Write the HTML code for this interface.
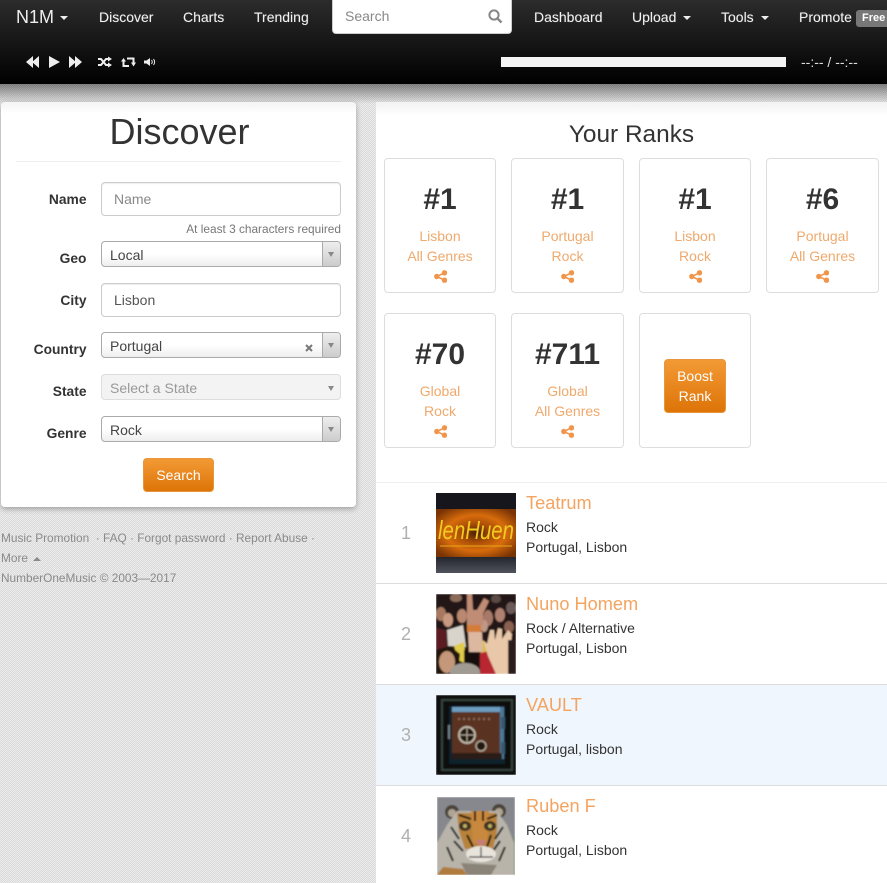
<!DOCTYPE html>
<html><head><meta charset="utf-8"><title>Discover</title>
<style>
*{box-sizing:border-box}
html,body{margin:0;padding:0}
body{width:887px;height:883px;overflow:hidden;position:relative;font-family:"Liberation Sans",sans-serif;font-size:14px;color:#333;
background-color:#e3e3e3;background-image:repeating-conic-gradient(#dadada 0 25%,#ececec 0 50%);background-size:2px 2px}
.a{position:absolute;white-space:nowrap}
#hd{position:absolute;left:0;top:0;width:887px;height:84px;background:linear-gradient(#2c2c2c,#000)}
#sh{position:absolute;left:0;top:84px;width:887px;height:20px;background:linear-gradient(rgba(0,0,0,.45),rgba(0,0,0,0))}
.n{color:#f2f2f2;top:9px;line-height:17px;text-shadow:0 0 1px rgba(255,255,255,.3)}
.car{display:inline-block;border-top:4px solid #eee;border-left:4px solid transparent;border-right:4px solid transparent;vertical-align:middle;margin-left:4px}
#card{position:absolute;left:1px;top:102px;width:355px;height:405px;background:linear-gradient(#f4f4f4,#fff 12px);border-radius:4px;box-shadow:0 2px 6px rgba(0,0,0,.3)}
#right{position:absolute;left:376px;top:102px;width:511px;height:781px;background:linear-gradient(#f2f2f2,#fff 14px)}
.lb{font-weight:bold;right:800.5px;text-align:right;color:#333;line-height:17px;font-size:13.8px}
.inp{position:absolute;left:101px;width:240px;height:34px;background:#fff;border:1px solid #ccc;border-radius:4px;box-shadow:inset 0 1px 1px rgba(0,0,0,.07);padding:0 12px;line-height:32px;color:#555}
.sel{position:absolute;left:101px;width:240px;height:26px;border:1px solid #aaa;border-radius:4px;background:linear-gradient(#fff 50%,#eee);padding-left:8px;line-height:26px;color:#444;overflow:hidden}
.sel i{position:absolute;right:0;top:0;width:18px;height:24px;border-left:1px solid #aaa;background:linear-gradient(#eee,#ccc)}
.sel i:after{content:"";position:absolute;left:5px;top:10px;border-top:5px solid #888;border-left:3.5px solid transparent;border-right:3.5px solid transparent}
.btn{position:absolute;background:linear-gradient(#f39a35,#dd7408);border:1px solid #e8953d;border-radius:4px;color:#fff;text-align:center}
.box{position:absolute;width:112px;height:135px;border:1px solid #ddd;border-radius:4px;background:#fff;text-align:center}
.box b{position:absolute;left:0;right:0;top:24px;font-size:30px;line-height:33px;color:#333}
.box span{position:absolute;left:0;right:0;top:67px;line-height:20px;color:#efa96c}
.box svg{position:absolute;left:49px;top:111px}
.ft{color:#8a8a8a;font-size:11.85px;line-height:20px;left:1px}
.row{position:absolute;left:376px;width:511px;height:101px;background:#fff;border-bottom:1px solid #ddd}
.num{position:absolute;left:25px;top:40px;font-size:18px;line-height:20px;color:#b0b0b0}
.t{position:absolute;left:150px;top:9px;font-size:18.2px;line-height:22px;color:#f4a460}
.s{position:absolute;left:150px;top:34px;line-height:20px;color:#333;white-space:nowrap}
.th{position:absolute;left:60px;top:10px;display:block}
</style></head><body>
<div id="hd"></div><div id="sh"></div>
<div class="a" style="left:16px;top:7px;font-size:18px;line-height:20px;color:#eee">N1M<span class="car" style="margin-left:6px"></span></div>
<div class="a n" style="left:99px">Discover</div>
<div class="a n" style="left:183px">Charts</div>
<div class="a n" style="left:254px">Trending</div>
<div class="a" style="left:332px;top:0;width:180px;height:34px;background:#fff;border-radius:0 0 4px 4px;border:1px solid #ccc;border-top:0;padding-left:12px;line-height:33px;color:#888">Search
<svg style="position:absolute;left:155px;top:9px" width="15" height="15" viewBox="0 0 15 15"><circle cx="6" cy="6" r="4.6" fill="none" stroke="#888" stroke-width="2"/><path d="M9.5 9.5L13.5 13.5" stroke="#888" stroke-width="2.4"/></svg></div>
<div class="a n" style="left:534px">Dashboard</div>
<div class="a n" style="left:632px">Upload<span class="car" style="margin-left:7px"></span></div>
<div class="a n" style="left:721px">Tools<span class="car" style="margin-left:7px"></span></div>
<div class="a n" style="left:799px">Promote</div>
<div class="a" style="left:856px;top:10px;width:31px;height:17px;background:#777;border-radius:3px 0 0 3px;color:#fff;font-weight:bold;font-size:11px;line-height:17px;padding-left:6px">Free</div>
<svg class="a" style="left:24px;top:54px" width="140" height="16" viewBox="0 0 140 16" fill="#eee">
<path d="M2 8L9 2V14ZM8 8L15 2V14Z"/><path d="M25 2L36 8L25 14Z"/><path d="M45 2L52 8L45 14ZM51 2L58 8L51 14Z"/>
<path d="M74 5H77L82 11H84M74 11H77L82 5H84" fill="none" stroke="#eee" stroke-width="2"/><path d="M84 2.500L88 5L84 7.500ZM84 8.500L88 11L84 13.500Z"/>
<path d="M99.500 7V12H105M109.500 9V4.500H103" fill="none" stroke="#eee" stroke-width="2"/><path d="M97 7.500L99.500 4L102 7.500ZM107 8.500L109.500 12.500L112 8.500Z"/>
<path d="M120 6.500H122.500L126 4V12L122.500 9.500H120Z"/><path d="M127.500 6C128.500 7.300 128.500 8.700 127.500 10M129.500 5C131 7 131 9 129.500 11" fill="none" stroke="#eee" stroke-width="1"/></svg>
<div class="a" style="left:501px;top:57px;width:285px;height:10px;background:#f4f4f4"></div>
<div class="a" style="left:801px;top:54px;color:#ddd;line-height:17px;font-size:14px">--:-- / --:--</div>

<div id="card"></div>
<div class="a" style="left:2px;width:355px;top:112px;text-align:center;font-size:36px;line-height:40px;color:#333">Discover</div>
<div class="a" style="left:16px;top:161px;width:325px;height:1px;background:#eee"></div>

<div class="a lb" style="top:191px">Name</div>
<div class="inp" style="top:182px;color:#888">Name</div>
<div class="a" style="right:546px;top:221px;color:#777;font-size:11.85px;line-height:16px">At least 3 characters required</div>
<div class="a lb" style="top:250px">Geo</div>
<div class="sel" style="top:241px">Local<i></i></div>
<div class="a lb" style="top:292px">City</div>
<div class="inp" style="top:283px">Lisbon</div>
<div class="a lb" style="top:341px">Country</div>
<div class="sel" style="top:332px">Portugal<i></i><svg style="position:absolute;left:203px;top:11px" width="8" height="8" viewBox="0 0 8 8"><path d="M1 1L7 7M7 1L1 7" stroke="#777" stroke-width="2"/></svg></div>
<div class="a lb" style="top:383px">State</div>
<div class="sel" style="top:374px;background:#f3f3f3;border-color:#ddd;color:#999">Select a State<span style="position:absolute;left:226px;top:11px;border-top:5px solid #888;border-left:3.500px solid transparent;border-right:3.500px solid transparent"></span></div>
<div class="a lb" style="top:425px">Genre</div>
<div class="sel" style="top:416px">Rock<i></i></div>
<div class="btn" style="left:143px;top:458px;width:71px;height:34px;line-height:32px">Search</div>

<div class="a ft" style="top:528px">Music Promotion &nbsp;· FAQ · Forgot password · Report Abuse ·</div>
<div class="a ft" style="top:548px">More <span style="display:inline-block;border-bottom:4px solid #8a8a8a;border-left:4px solid transparent;border-right:4px solid transparent;vertical-align:middle;margin-left:2px"></span></div>
<div class="a ft" style="top:568px">NumberOneMusic © 2003—2017</div>

<div id="right"></div>
<div class="a" style="left:376px;top:120px;width:511px;text-align:center;font-size:24.4px;line-height:30px;color:#333">Your Ranks</div>

<svg width="0" height="0" style="position:absolute"><defs><filter id="bl" x="-5%" y="-5%" width="110%" height="110%"><feGaussianBlur stdDeviation=".8"/></filter><g id="sh2"><circle cx="10.500" cy="2.800" r="2.700" fill="#f0954a"/><circle cx="2.800" cy="6.500" r="2.700" fill="#f0954a"/><circle cx="10.500" cy="10.200" r="2.700" fill="#f0954a"/><path d="M10.500 2.800L2.800 6.500L10.500 10.200" fill="none" stroke="#f0954a" stroke-width="1.600"/></g></defs></svg>

<div class="box" style="left:384px;top:158px"><b>#1</b><span>Lisbon<br>All Genres</span><svg width="13" height="13"><use href="#sh2"/></svg></div>
<div class="box" style="left:511px;top:158px;width:113px"><b>#1</b><span>Portugal<br>Rock</span><svg width="13" height="13"><use href="#sh2"/></svg></div>
<div class="box" style="left:639px;top:158px"><b>#1</b><span>Lisbon<br>Rock</span><svg width="13" height="13"><use href="#sh2"/></svg></div>
<div class="box" style="left:766px;top:158px;width:113px"><b>#6</b><span>Portugal<br>All Genres</span><svg width="13" height="13"><use href="#sh2"/></svg></div>
<div class="box" style="left:384px;top:313px"><b>#70</b><span>Global<br>Rock</span><svg width="13" height="13"><use href="#sh2"/></svg></div>
<div class="box" style="left:511px;top:313px;width:113px"><b>#711</b><span>Global<br>All Genres</span><svg width="13" height="13"><use href="#sh2"/></svg></div>
<div class="box" style="left:639px;top:313px"></div>
<div class="btn" style="left:664px;top:359px;width:62px;height:54px;line-height:20px;padding-top:6px">Boost<br>Rank</div>

<div class="a" style="left:376px;top:482px;width:511px;height:1px;background:#f0f0f0"></div>

<div class="row" style="top:483px"><div class="num">1</div>
<svg class="th" width="80" height="80" viewBox="0 0 80 80"><defs><radialGradient id="g1" cx=".5" cy=".5" r=".62"><stop offset="0" stop-color="#4a2004"/><stop offset=".3" stop-color="#a84c06"/><stop offset=".6" stop-color="#d86c0c"/><stop offset="1" stop-color="#7a3404"/></radialGradient><linearGradient id="g2" x1="0" y1="0" x2="0" y2="1"><stop offset="0" stop-color="#24262e"/><stop offset="1" stop-color="#50525c"/></linearGradient></defs><rect width="80" height="17" fill="#16161c"/><rect y="16" width="80" height="48" fill="url(#g1)"/><rect y="64" width="80" height="16" fill="url(#g2)"/><path d="M4 53H76" stroke="#e8a818" stroke-width="1"/><text x="2" y="46" font-family="Liberation Sans Narrow,Liberation Sans,sans-serif" font-style="italic" font-size="26" fill="#f0cc20" textLength="76" lengthAdjust="spacingAndGlyphs">lenHuen</text></svg>
<div class="t">Teatrum</div><div class="s">Rock<br>Portugal, Lisbon</div></div>

<div class="row" style="top:584px"><div class="num">2</div>
<svg class="th" width="80" height="80" viewBox="0 0 80 80"><g filter="url(#bl)"><rect width="80" height="80" fill="#241814"/>
<ellipse cx="5" cy="20" rx="5" ry="7" fill="#a87860"/><ellipse cx="12" cy="26" rx="5" ry="7" fill="#c89880"/><ellipse cx="26" cy="22" rx="5" ry="7" fill="#b88870"/><ellipse cx="52" cy="24" rx="5" ry="8" fill="#a87868"/><ellipse cx="64" cy="21" rx="5" ry="7" fill="#b08070"/><ellipse cx="48" cy="32" rx="4" ry="6" fill="#c09888"/><ellipse cx="73" cy="33" rx="5" ry="6" fill="#8a6050"/>
<ellipse cx="20" cy="4" rx="6" ry="4" fill="#8a6a58"/><ellipse cx="60" cy="5" rx="5" ry="4" fill="#5a4a44"/><ellipse cx="75" cy="14" rx="5" ry="6" fill="#6a5a58"/>
<path d="M11 36L27 31L30 53L12 52Z" fill="#d8d4cc"/><path d="M0 34L10 36L12 60H0Z" fill="#5a1c20"/>
<path d="M18 52L28 48L30 70L22 66Z" fill="#e0cc48"/><path d="M46 46L52 50L50 66L44 64Z" fill="#d8c040"/><path d="M28 56H44L42 72H28Z" fill="#141010"/>
<path d="M32 38H46L47 58H33Z" fill="#dcb8a0"/>
<path d="M31 0H36L37 16L41 16L48 4L53 7L47 20L47 31H31Z" fill="#c08c74"/><rect x="31" y="31" width="14" height="7" fill="#d47c38"/>
<path d="M44 59L58 56L60 80H44Z" fill="#b82830"/>
<path d="M47 46L51 50L54 36H58L59 46L62 34L66 35L66 45L72 36L76 40L74 60L78 76L72 80H60L52 62Z" fill="#e8c8a8"/>
<rect x="72" y="46" width="8" height="34" fill="#2c1c1c"/>
<path d="M0 56L14 52L24 60L22 80H0Z" fill="#241410"/><ellipse cx="11" cy="68" rx="8" ry="11" fill="#c49878"/>
<ellipse cx="29" cy="78" rx="15" ry="9" fill="#a09c94"/></g></svg>
<div class="t">Nuno Homem</div><div class="s">Rock / Alternative<br>Portugal, Lisbon</div></div>

<div class="row" style="top:685px;background:#f0f6fd"><div class="num">3</div>
<svg class="th" width="80" height="80" viewBox="0 0 80 80"><g filter="url(#bl)"><rect width="80" height="80" fill="#080a0a"/><rect x="6" y="5" width="70" height="70" fill="none" stroke="#34423e" stroke-width="2"/><rect x="13" y="11" width="56" height="58" fill="#10202c"/><rect x="16" y="14" width="50" height="50" fill="#5a3222"/><rect x="16" y="12" width="50" height="5" fill="#6c9cc0"/><rect x="64" y="12" width="4" height="52" fill="#4c7898"/><rect x="16" y="58" width="50" height="6" fill="#2c1a14"/><circle cx="31" cy="40" r="8" fill="#201810" stroke="#c0b8a8" stroke-width="2"/><path d="M31 32V48M23 40H39" stroke="#b0a898"/><circle cx="45" cy="51" r="5" fill="#201810" stroke="#b0a898" stroke-width="1.500"/><rect x="65" y="22" width="4" height="12" fill="#385870"/><rect x="65" y="47" width="4" height="12" fill="#385870"/><rect x="12" y="30" width="2" height="14" fill="#708088"/><path d="M22 24H56" stroke="#8a6a58" stroke-dasharray="2 3" stroke-width="2"/></g></svg>
<div class="t">VAULT</div><div class="s">Rock<br>Portugal, lisbon</div></div>

<div class="row" style="top:786px;height:97px;border-bottom:0"><div class="num">4</div>
<svg class="th" style="left:61px;top:11px" width="78" height="78" viewBox="0 0 78 78"><g filter="url(#bl)"><rect width="78" height="78" fill="#86888e"/><rect x="66" y="40" width="12" height="38" fill="#7a8a70"/>
<circle cx="15" cy="15" r="7" fill="#4c4238"/><circle cx="15" cy="16" r="4" fill="#b0a494"/><circle cx="62" cy="14" r="7" fill="#4c4238"/><circle cx="62" cy="15" r="4" fill="#b0a494"/>
<path d="M0 78V46L10 28L20 14H60L70 28L77 46V78Z" fill="#b8b4aa"/>
<path d="M20 16H60L60 34L56 52H28L22 34Z" fill="#b8823a"/><path d="M34 14H52L50 46H36Z" fill="#c8883c"/>
<path d="M22 18L34 22M60 18L50 22M38 14L38 24M46 14L46 24M14 30L22 42M66 30L58 42M17 44L26 54M63 44L56 54M30 38L36 50M54 38L50 50M10 50L16 64M68 50L62 64" stroke="#181410" stroke-width="2" fill="none"/>
<ellipse cx="28" cy="29" rx="6" ry="5" fill="#3c3020"/><ellipse cx="53" cy="29" rx="6" ry="5" fill="#3c3020"/><circle cx="28" cy="29" r="2" fill="#c0b060"/><circle cx="53" cy="29" r="2" fill="#c0b060"/>
<path d="M38 43H50L44 50Z" fill="#c87c78"/>
<ellipse cx="44" cy="57" rx="15" ry="8" fill="#e8e4dc"/><path d="M32 60H56M44 50V60" stroke="#2c2824" stroke-width="1.200"/>
<path d="M0 78L6 70L26 72L30 78Z" fill="#b07c3c"/><path d="M24 66L60 68L54 78H30Z" fill="#8a8478"/></g></svg>
<div class="t">Ruben F</div><div class="s">Rock<br>Portugal, Lisbon</div></div>
</body></html>
